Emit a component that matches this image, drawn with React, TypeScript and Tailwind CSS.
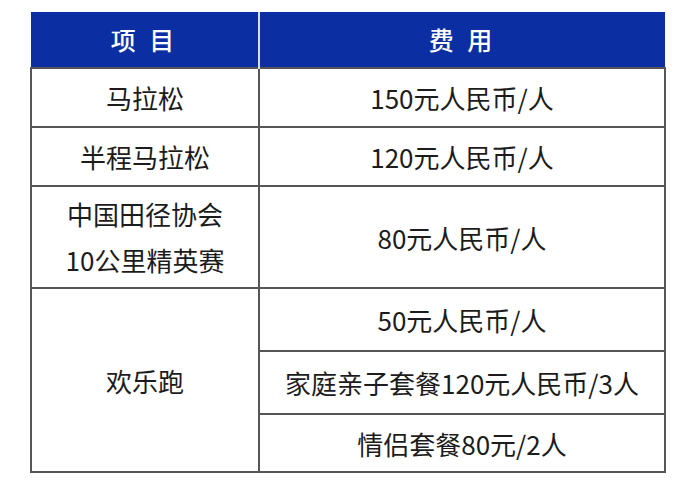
import React from 'react';

const cell = 'border-2 border-[#555] text-center align-middle text-[26px] text-[#1c1c1c]';

export default function App() {
  return (
    <div
      className="w-[699px] h-[483px] bg-white pt-[12px] pl-[30px]"
      style={{ fontFamily: '"Noto Sans CJK SC", "Noto Sans", sans-serif' }}
    >
      <table className="w-[636px] border-collapse table-fixed">
        <colgroup>
          <col className="w-[228px]" />
          <col />
        </colgroup>
        <thead>
          <tr className="h-[56px] bg-[#0b2fa3] text-white">
            <th className="border-r-2 border-[#d8dcef] text-[25px] font-medium tracking-[4px]">项 目</th>
            <th className="text-[25px] font-medium tracking-[4px]">费 用</th>
          </tr>
        </thead>
        <tbody>
          <tr className="h-[59px]">
            <td className={cell}>马拉松</td>
            <td className={cell}>150元人民币/人</td>
          </tr>
          <tr className="h-[59px]">
            <td className={cell}>半程马拉松</td>
            <td className={cell}>120元人民币/人</td>
          </tr>
          <tr className="h-[102px]">
            <td className={`${cell} leading-[46px]`}>
              中国田径协会
              <br />
              10公里精英赛
            </td>
            <td className={cell}>80元人民币/人</td>
          </tr>
          <tr className="h-[63px]">
            <td className={cell} rowSpan={3}>欢乐跑</td>
            <td className={cell}>50元人民币/人</td>
          </tr>
          <tr className="h-[63px]">
            <td className={cell}>家庭亲子套餐120元人民币/3人</td>
          </tr>
          <tr className="h-[58px]">
            <td className={cell}>情侣套餐80元/2人</td>
          </tr>
        </tbody>
      </table>
    </div>
  );
}
